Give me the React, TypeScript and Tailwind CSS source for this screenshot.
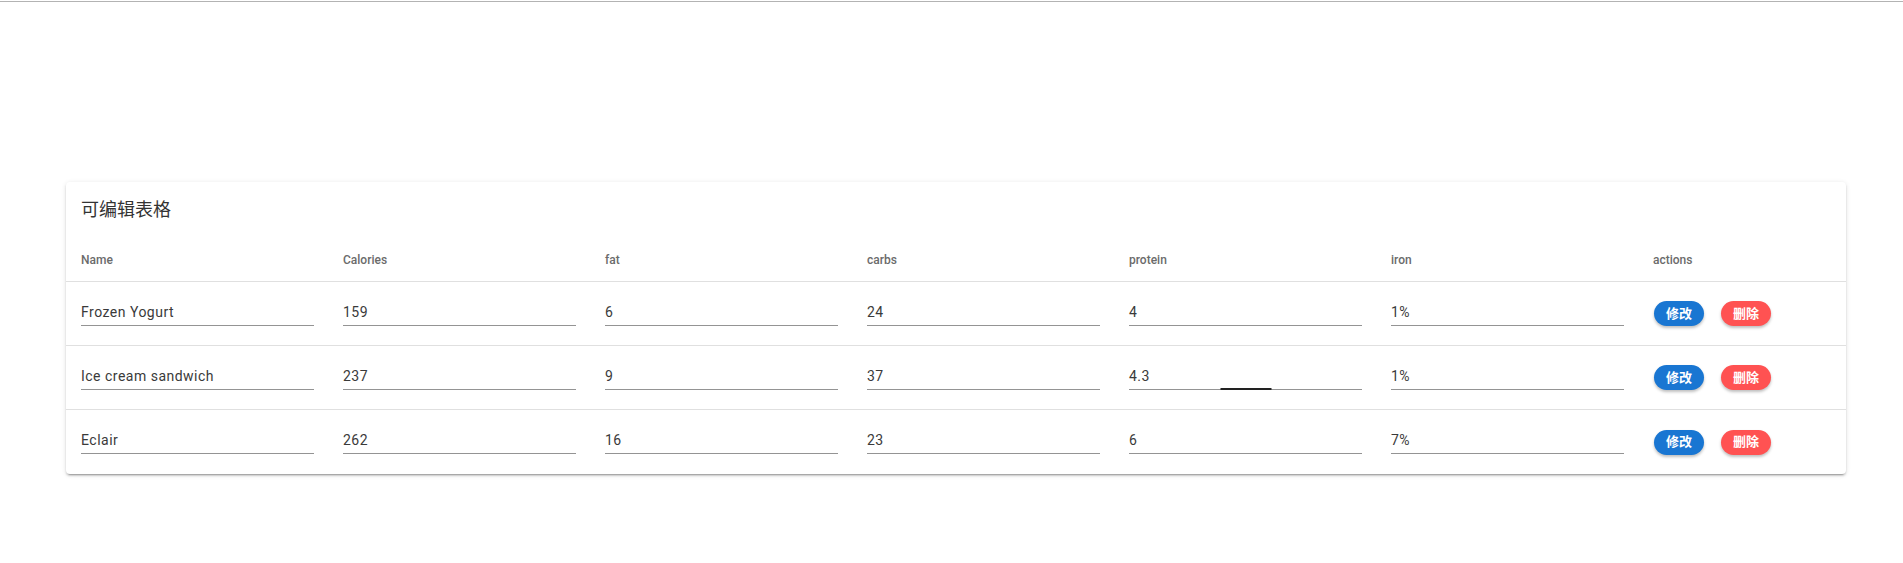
/**
 * 可编辑表格
 *
 * 卡片里一张可编辑的营养表，每个单元格是一条带下划线的输入框，最后一列是修改/删除按钮。
 */

type Dessert = {
  name: string;
  calories: string;
  fat: string;
  carbs: string;
  protein: string;
  iron: string;
};

const desserts: Dessert[] = [
  { name: "Frozen Yogurt", calories: "159", fat: "6", carbs: "24", protein: "4", iron: "1%" },
  { name: "Ice cream sandwich", calories: "237", fat: "9", carbs: "37", protein: "4.3", iron: "1%" },
  { name: "Eclair", calories: "262", fat: "16", carbs: "23", protein: "6", iron: "7%" },
];

const fields: (keyof Dessert)[] = ["name", "calories", "fat", "carbs", "protein", "iron"];
const headers = ["Name", "Calories", "fat", "carbs", "protein", "iron", "actions"];

const gridCols =
  "grid grid-cols-[262px_262px_262px_262px_262px_262px_1fr]";

// 只有正在获得焦点的那一格会带上中间那段深色下划线
function Field({ value, focusing }: { value: string; focusing?: boolean }) {
  return (
    <div className="relative w-[233px] border-b border-[#949494]">
      <div className="h-5 pb-[3px] box-content text-sm leading-5 tracking-[0.035em] text-[#3a3a3a]">
        {value}
      </div>
      {focusing && (
        <div className="absolute -bottom-px left-1/2 h-[2px] w-[51px] -translate-x-1/2 bg-[#222]" />
      )}
    </div>
  );
}

export default function App() {
  return (
    <div
      className="min-h-[563px] bg-white"
      style={{ fontFamily: 'Roboto, "Noto Sans CJK SC", sans-serif' }}
    >
      <div className="mt-px h-px bg-[#b3b3b3]" />

      <div className="ml-[66px] mr-[57px] mt-[180px] rounded bg-white shadow-[0_3px_1px_-2px_rgba(0,0,0,0.2),0_2px_2px_0_rgba(0,0,0,0.14),0_1px_5px_0_rgba(0,0,0,0.12)]">
        <div className="flex h-[56px] items-center pl-[15px] text-lg text-[#333]">
          可编辑表格
        </div>

        <div className={`${gridCols} h-[44px] items-center border-b border-[#e0e0e0]`}>
          {headers.map((h) => (
            <div key={h} className="pl-[15px] text-xs font-medium text-[#6b6b6b]">
              {h}
            </div>
          ))}
        </div>

        {desserts.map((d, i) => (
          <div
            key={d.name}
            className={`${gridCols} h-[64px] items-center ${
              i < desserts.length - 1 ? "border-b border-[#e0e0e0]" : ""
            }`}
          >
            {fields.map((f) => (
              <div key={f} className="pl-[15px]">
                <Field value={d[f]} focusing={i === 1 && f === "protein"} />
              </div>
            ))}
            <div className="flex items-center gap-[17px] pl-[16px]">
              <button className="h-[25px] rounded-full bg-[#1976d2] px-3 text-[13px] font-bold text-white shadow-[0_2px_3px_rgba(0,0,0,0.25)]">
                修改
              </button>
              <button className="h-[25px] rounded-full bg-[#ff5252] px-3 text-[13px] font-bold text-white shadow-[0_2px_3px_rgba(0,0,0,0.25)]">
                删除
              </button>
            </div>
          </div>
        ))}
      </div>
    </div>
  );
}
